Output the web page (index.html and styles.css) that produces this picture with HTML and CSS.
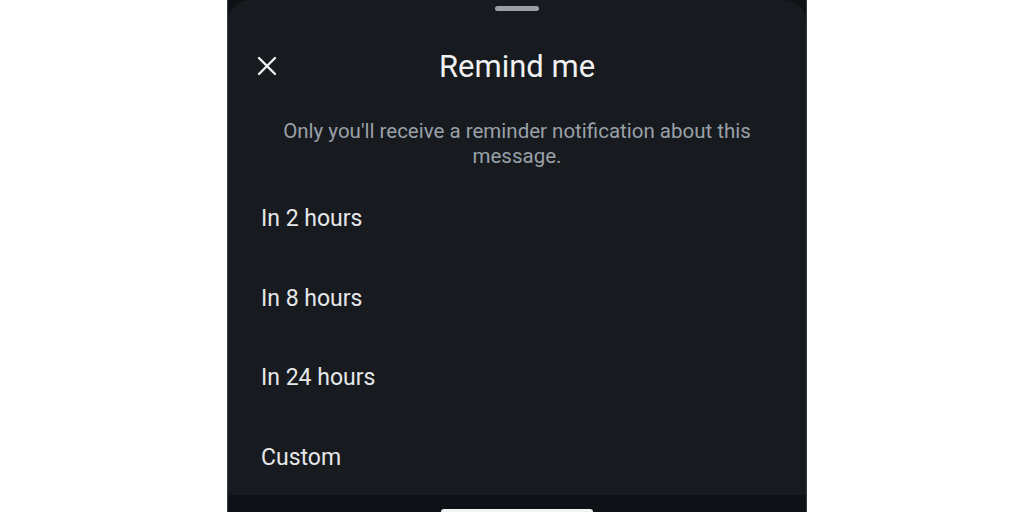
FILE: index.html
```html
<!DOCTYPE html>
<html>
	<head>
		<meta charset="utf-8" />
		<title>Remind me</title>
		<link rel="stylesheet" href="styles.css">
	</head>
	<body>
		<div class="phone">
			<div class="sheet">
				<div class="handle"></div>

				<div class="header">
					<div class="close">
						<svg width="20" height="20" viewBox="0 0 20 20">
							<path d="M2 2 L18 18 M18 2 L2 18" stroke="#f2f2f2" stroke-width="2.4" stroke-linecap="round"/>
						</svg>
					</div>
					<div class="title">Remind me</div>
				</div>

				<p class="note">Only you'll receive a reminder notification about this message.</p>

				<div class="options">
					<div class="option">In 2 hours</div>
					<div class="option">In 8 hours</div>
					<div class="option">In 24 hours</div>
					<div class="option">Custom</div>
				</div>
			</div>

			<div class="navbar">
				<div class="pill"></div>
			</div>
		</div>
	</body>
</html>
```

FILE: styles.css
```css
body{
	margin: 0;
	background-color: #ffffff;
	font-family: Roboto, "Liberation Sans", sans-serif;
}

.phone{
	width: 580px;
	height: 512px;
	margin-left: 227px;
	background-color: #0e1115;
	border-left: 1px solid #3a3d42;
	border-right: 1px solid #3a3d42;
	box-sizing: border-box;
	overflow: hidden;
}

.sheet{
	height: 495px;
	background-color: #171b1f;
	border-radius: 22px 22px 0 0;
	overflow: hidden;
}

.handle{
	width: 44px;
	height: 5px;
	margin: 6px auto 0 auto;
	border-radius: 3px;
	background-color: #9c9ea5;
}

.header{
	height: 40px;
	margin-top: 35px;
	position: relative;
	display: flex;
	justify-content: center;
	align-items: center;
}

.close{
	position: absolute;
	left: 29px;
	top: 10px;
	width: 20px;
	height: 20px;
}

.title{
	font-size: 31px;
	color: #f1f1f1;
}

.note{
	width: 520px;
	margin: 33px auto 0 auto;
	text-align: center;
	font-size: 20.5px;
	line-height: 25px;
	color: #9aa0a8;
}

.options{
	margin-top: 10px;
}

.option{
	height: 80px;
	line-height: 80px;
	padding-left: 33px;
	font-size: 23px;
	color: #e6e7e9;
	margin-bottom: -0.3px;
}

.navbar{
	height: 17px;
	display: flex;
	justify-content: center;
	align-items: flex-end;
}

.pill{
	width: 152px;
	height: 3px;
	background-color: #f4f4f4;
	border-radius: 3px 3px 0 0;
}
```
